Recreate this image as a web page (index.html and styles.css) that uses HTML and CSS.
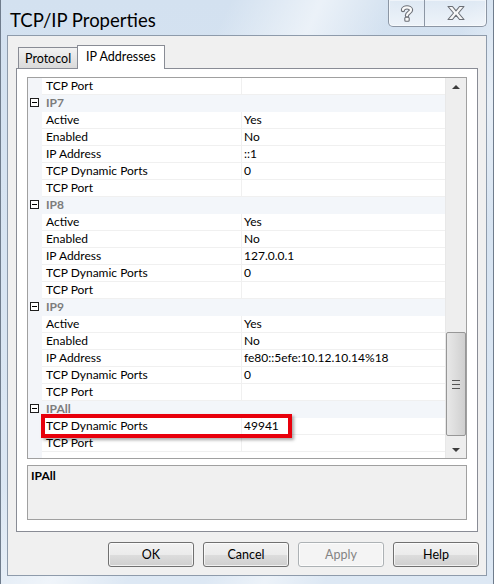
FILE: index.html
```html
<!DOCTYPE html>
<html lang="en">
<head>
    <meta charset="UTF-8">
    <title>TCP/IP Properties</title>
    <link rel="stylesheet" href="styles.css">
</head>
<body>
    <div class="window">
        <div class="titlebar">
            <span class="title">TCP/IP Properties</span>
            <div class="caption-btns">
                <span class="cbtn help">
                    <svg width="16" height="18" viewBox="0 0 16 18">
                        <path d="M4 6 C4 2.5 12 2.5 12 6 C12 8.5 8 8.5 8 11.5" fill="none" stroke="#6b6f76" stroke-width="4.4" stroke-linecap="round"/>
                        <path d="M4 6 C4 2.5 12 2.5 12 6 C12 8.5 8 8.5 8 11.5" fill="none" stroke="#fafafa" stroke-width="2.2" stroke-linecap="round"/>
                        <rect x="5.8" y="13.2" width="4.4" height="4" rx="1" fill="#fafafa" stroke="#6b6f76" stroke-width="1.1"/>
                    </svg>
                </span>
                <span class="cbtn close">
                    <svg width="22" height="16" viewBox="0 0 22 16">
                        <path d="M3 1.5 H7.5 L11 5.8 L14.5 1.5 H19 L13.5 8 L19 14.5 H14.5 L11 10.2 L7.5 14.5 H3 L8.5 8 Z" fill="#f7f7f7" stroke="#6b6f76" stroke-width="1.1" stroke-linejoin="round"/>
                    </svg>
                </span>
            </div>
        </div>
        <div class="client">
            <div class="tabs">
                <div class="tab">Protocol</div>
                <div class="tab active">IP Addresses</div>
            </div>
            <div class="panel">
                <div class="grid">
                    <div class="rows">
                        <div class="row"><span class="gutter"></span><span class="name">TCP Port</span><span class="value"></span></div>
                        <div class="row cat"><span class="gutter"><i class="toggle"></i></span><span class="name">IP7</span></div>
                        <div class="row"><span class="gutter"></span><span class="name">Active</span><span class="value">Yes</span></div>
                        <div class="row"><span class="gutter"></span><span class="name">Enabled</span><span class="value">No</span></div>
                        <div class="row"><span class="gutter"></span><span class="name">IP Address</span><span class="value">::1</span></div>
                        <div class="row"><span class="gutter"></span><span class="name">TCP Dynamic Ports</span><span class="value">0</span></div>
                        <div class="row"><span class="gutter"></span><span class="name">TCP Port</span><span class="value"></span></div>
                        <div class="row cat"><span class="gutter"><i class="toggle"></i></span><span class="name">IP8</span></div>
                        <div class="row"><span class="gutter"></span><span class="name">Active</span><span class="value">Yes</span></div>
                        <div class="row"><span class="gutter"></span><span class="name">Enabled</span><span class="value">No</span></div>
                        <div class="row"><span class="gutter"></span><span class="name">IP Address</span><span class="value">127.0.0.1</span></div>
                        <div class="row"><span class="gutter"></span><span class="name">TCP Dynamic Ports</span><span class="value">0</span></div>
                        <div class="row"><span class="gutter"></span><span class="name">TCP Port</span><span class="value"></span></div>
                        <div class="row cat"><span class="gutter"><i class="toggle"></i></span><span class="name">IP9</span></div>
                        <div class="row"><span class="gutter"></span><span class="name">Active</span><span class="value">Yes</span></div>
                        <div class="row"><span class="gutter"></span><span class="name">Enabled</span><span class="value">No</span></div>
                        <div class="row"><span class="gutter"></span><span class="name">IP Address</span><span class="value">fe80::5efe:10.12.10.14%18</span></div>
                        <div class="row"><span class="gutter"></span><span class="name">TCP Dynamic Ports</span><span class="value">0</span></div>
                        <div class="row"><span class="gutter"></span><span class="name">TCP Port</span><span class="value"></span></div>
                        <div class="row cat"><span class="gutter"><i class="toggle"></i></span><span class="name">IPAll</span></div>
                        <div class="row"><span class="gutter"></span><span class="name">TCP Dynamic Ports</span><span class="value">49941</span></div>
                        <div class="row"><span class="gutter"></span><span class="name">TCP Port</span><span class="value"></span></div>
                        <div class="filler"><span class="gutter"></span></div>
                        <div class="highlight"></div>
                    </div>
                    <div class="scrollbar">
                        <div class="sb-btn"><span class="arrow up"></span></div>
                        <div class="sb-track">
                            <div class="thumb"><span class="grip"></span></div>
                        </div>
                        <div class="sb-btn"><span class="arrow down"></span></div>
                    </div>
                </div>
                <div class="desc"><b>IPAll</b></div>
            </div>
            <div class="buttons">
                <button>OK</button>
                <button>Cancel</button>
                <button disabled>Apply</button>
                <button>Help</button>
            </div>
        </div>
    </div>
</body>
</html>
```

FILE: styles.css
```css
body {
    margin: 0;
    font-family: Lato, "Noto Sans", sans-serif;
    font-size: 12px;
    color: #000;
}
.window {
    width: 494px;
    height: 584px;
    box-sizing: border-box;
    border-left: 1px solid #6f7c8c;
    border-right: 1px solid #6f7c8c;
    background:
        linear-gradient(115deg, rgba(255,255,255,0) 30%, rgba(255,255,255,0.55) 42%, rgba(255,255,255,0) 52%),
        linear-gradient(115deg, rgba(255,255,255,0) 62%, rgba(255,255,255,0.45) 70%, rgba(255,255,255,0) 78%),
        linear-gradient(#d3e1f0, #dde8f4);
    display: flex;
    flex-direction: column;
}
.titlebar {
    height: 35px;
    display: flex;
    justify-content: space-between;
    align-items: flex-start;
}
.title {
    font-size: 18.5px;
    line-height: 20px;
    margin: 10px 0 0 9px;
    color: #000;
}
.caption-btns {
    display: flex;
    margin-right: 6px;
    height: 26px;
    border: 1px solid #8c96a4;
    border-top: none;
    border-radius: 0 0 5px 5px;
    background: linear-gradient(rgba(255,255,255,0.25), rgba(255,255,255,0.6));
    box-shadow: inset 0 0 0 1px rgba(255,255,255,0.5);
}
.cbtn {
    display: flex;
    align-items: center;
    justify-content: center;
}
.cbtn.help {
    width: 35px;
    border-right: 1px solid #8c96a4;
}
.cbtn.close {
    width: 61px;
}
.client {
    margin: 0 6px;
    height: 541px;
    box-sizing: border-box;
    border: 1px solid #8e9bab;
    background: #f0f0f0;
    padding: 9px 8px 8px 8px;
    display: flex;
    flex-direction: column;
}
.tabs {
    display: flex;
    align-items: flex-end;
    height: 23px;
    padding-left: 2px;
    position: relative;
    z-index: 1;
}
.tab {
    height: 21px;
    box-sizing: border-box;
    border: 1px solid #898c95;
    border-bottom: none;
    padding: 0 6px;
    line-height: 21px;
    font-size: 12.5px;
    background: linear-gradient(#f2f2f2, #dadada);
}
.tab.active {
    height: 24px;
    margin-bottom: -1px;
    margin-left: -1px;
    padding: 0 8px;
    line-height: 22px;
    background: #fff;
}
.panel {
    height: 464px;
    box-sizing: border-box;
    border: 1px solid #898c95;
    background: #fff;
    padding: 8px 10px 0 10px;
}
.grid {
    height: 382px;
    box-sizing: border-box;
    border: 1px solid #a0a0a0;
    display: flex;
}
.rows {
    flex: 1;
    display: flex;
    flex-direction: column;
    position: relative;
}
.row {
    height: 17px;
    display: flex;
    flex-shrink: 0;
}
.gutter {
    width: 14px;
    flex-shrink: 0;
    background: #f3f5f9;
    display: flex;
    align-items: flex-start;
}
.name {
    width: 200px;
    box-sizing: border-box;
    padding-left: 4px;
    line-height: 16px;
    border-bottom: 1px solid #f0f0f0;
    border-right: 1px solid #f0f0f0;
    white-space: nowrap;
}
.value {
    flex: 1;
    padding-left: 2px;
    line-height: 16px;
    border-bottom: 1px solid #f0f0f0;
    white-space: nowrap;
}
.row.cat {
    background: #f3f6fa;
}
.row.cat .name {
    flex: 1;
    border: none;
    font-weight: bold;
    color: #7c7c7c;
}
.toggle {
    width: 7px;
    height: 7px;
    border: 1px solid #1e1e1e;
    background: #fff;
    position: relative;
    margin: 3px 0 0 2px;
}
.toggle::after {
    content: "";
    position: absolute;
    left: 1px;
    right: 1px;
    top: 3px;
    height: 1px;
    background: #000;
}
.filler {
    flex: 1;
    display: flex;
}
.highlight {
    position: absolute;
    left: 13px;
    top: 336px;
    width: 251px;
    height: 24px;
    box-sizing: border-box;
    border: 4px solid #e8000c;
    box-shadow: 2px 2px 3px rgba(0,0,0,0.35);
}
.scrollbar {
    width: 20px;
    background: #eeeeee;
    border-left: 1px solid #e8e8e8;
    display: flex;
    flex-direction: column;
}
.sb-btn {
    height: 17px;
    display: flex;
    align-items: center;
    justify-content: center;
}
.arrow {
    width: 0;
    height: 0;
    border-left: 4px solid transparent;
    border-right: 4px solid transparent;
}
.arrow.up {
    border-bottom: 4px solid #3c3c3c;
}
.arrow.down {
    border-top: 4px solid #3c3c3c;
}
.sb-track {
    flex: 1;
    display: flex;
    flex-direction: column;
    justify-content: flex-end;
    padding-bottom: 5px;
}
.thumb {
    height: 104px;
    box-sizing: border-box;
    border: 1px solid #979797;
    border-radius: 2px;
    background: linear-gradient(90deg, #e8e8e8, #dcdcdc 50%, #cfcfcf);
    display: flex;
    align-items: center;
    justify-content: center;
}
.grip {
    width: 8px;
    height: 7px;
    border-top: 1px solid #555;
    border-bottom: 1px solid #555;
    background: linear-gradient(transparent 3px, #555 3px, #555 4px, transparent 4px);
}
.desc {
    margin-top: 6px;
    height: 55px;
    box-sizing: border-box;
    border: 1px solid #a0a0a0;
    background: #f0f0f0;
    padding: 2px 3px;
}
.buttons {
    display: flex;
    justify-content: flex-end;
    gap: 9px;
    margin-top: 10px;
    margin-right: -1px;
}
button {
    width: 86px;
    height: 25px;
    font-family: Lato, "Noto Sans", sans-serif;
    font-size: 12.5px;
    color: #000;
    border: 1px solid #707070;
    border-radius: 3px;
    background: linear-gradient(#f2f2f2 0%, #ebebeb 50%, #dddddd 51%, #cfcfcf 100%);
    box-shadow: inset 0 0 0 1px rgba(255,255,255,0.7);
    padding: 0;
}
button:disabled {
    color: #838383;
    border-color: #adb2b5;
    background: #f4f4f4;
}
```
